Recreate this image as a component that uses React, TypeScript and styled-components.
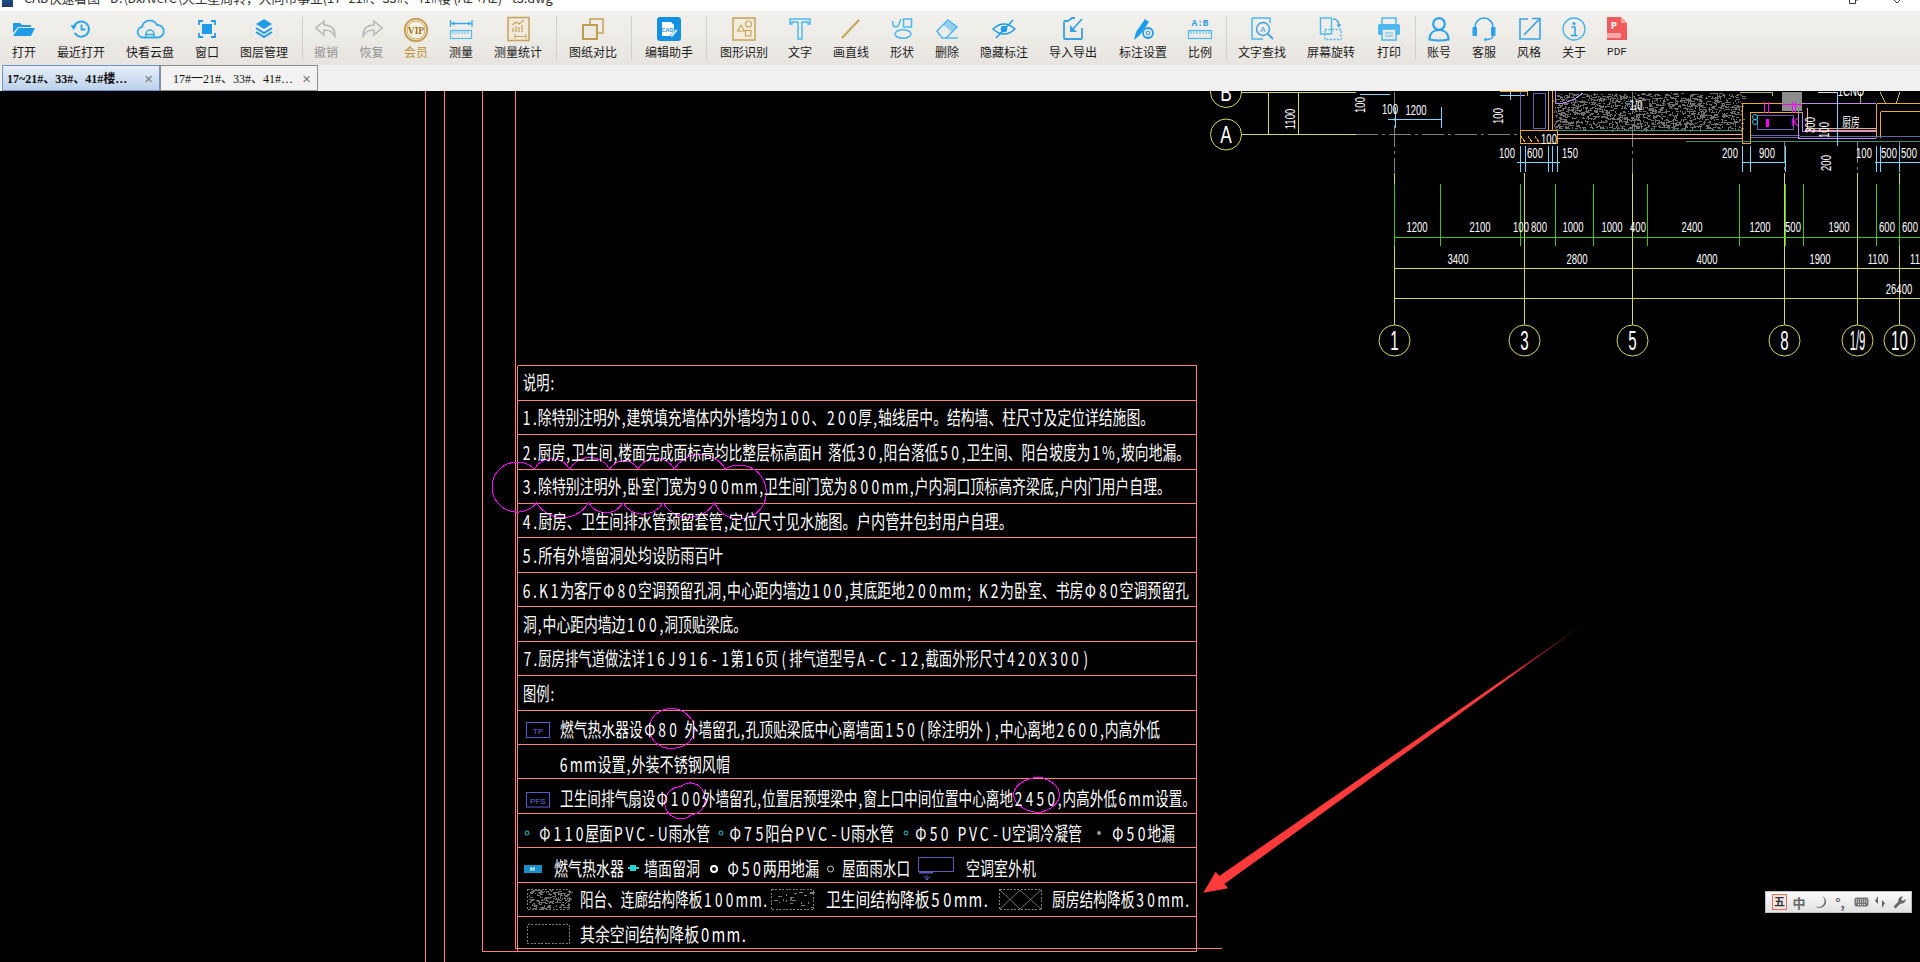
import React, { useMemo } from "react";
import styled, { createGlobalStyle } from "styled-components";

const Global = createGlobalStyle`
  html, body { margin: 0; padding: 0; background: #000; overflow: hidden; }
  * { box-sizing: border-box; }
`;
const Shell = styled.div`
  width: 1920px; height: 962px; display: flex; flex-direction: column; overflow: hidden;
  font-family: "Noto Sans CJK SC", "Liberation Sans", sans-serif;
`;
const TitleBar = styled.div`
  height: 11px; flex: none; background: #fff; display: flex; overflow: hidden; align-items: flex-start;
  padding-left: 2px;
`;
const AppMark = styled.div`
  width: 11px; height: 7px; background: linear-gradient(#1d4f8f, #24385e); flex: none;
`;
const TitleText = styled.div`
  margin: -12px 0 0 11px; font-size: 12.8px; line-height: 20px; color: #333; white-space: nowrap; flex: 1;
`;
const WinIcons = styled.div`
  display: flex; gap: 34px; padding-right: 18px; flex: none; align-items: flex-start;
`;
const Toolbar = styled.div`
  height: 54px; flex: none; display: flex; background: linear-gradient(#f2f1ed, #e8e5e0);
`;
const ToolButton = styled.div<{ $w: number; $tone?: string }>`
  width: ${p => p.$w}px; flex: none; display: flex; flex-direction: column; align-items: center;
  padding-top: 5px; font-size: 12px; line-height: 16px; white-space: nowrap;
  color: ${p => (p.$tone === "off" ? "#929292" : p.$tone === "gold" ? "#c08f2e" : "#1c1c1c")};
`;
const IconBox = styled.div`
  width: 28px; height: 26px; margin-bottom: 2px; flex: none;
  svg { display: block; overflow: visible; }
`;
const PdfLabel = styled.span`
  font-family: "Liberation Mono", monospace; font-size: 11px; font-weight: 400;
`;
const SepSlot = styled.div<{ $w: number }>`
  width: ${p => p.$w}px; flex: none; display: flex; justify-content: center; padding: 5px 0;
`;
const SepLine = styled.div`
  width: 1px; height: 44px; background: #d2cfca;
`;
const TabStrip = styled.div`
  height: 26px; flex: none; background: #f0f0f0; display: flex; padding-left: 2px;
`;
const Tab = styled.div<{ $active?: boolean }>`
  width: 158px; height: 26px; display: flex; align-items: center; justify-content: space-between;
  padding: 0 6px 0 ${p => (p.$active ? 4 : 12)}px; border: 1px solid ${p => (p.$active ? "#6e93c6" : "#8e8e8e")};
  background: ${p => (p.$active ? "linear-gradient(#e6eef8, #bcd2ea)" : "#f2f2f2")};
  font-family: "Liberation Serif", "Noto Sans CJK SC", serif; font-size: 12px;
  font-weight: ${p => (p.$active ? 700 : 400)}; color: #111; white-space: nowrap; overflow: hidden;
`;
const TabClose = styled.span`
  font-family: "Liberation Sans", sans-serif; font-size: 15px; font-weight: 400; color: #777; line-height: 1;
`;
const Canvas = styled.div`
  position: relative; flex: 1; background: #000; overflow: hidden;
  svg.cad { display: block; }
`;
const NoteText = styled.text`
  font-family: "Noto Sans CJK SC", "Liberation Sans", sans-serif; font-weight: 400; font-size: 18px;
  fill: #fff; text-anchor: middle;
`;
const DimText = styled.text`
  font-family: "Liberation Sans", sans-serif; font-size: 14px; fill: #fff; text-anchor: middle;
`;
const ImeBar = styled.div`
  position: absolute; left: 1765px; top: 800px; width: 147px; height: 22px; display: flex; align-items: center;
  padding-left: 6px; background: linear-gradient(#fafafa, #e2e2e2); border: 1px solid #bdbdbd;
  color: #666; font-size: 13px; font-weight: 700;
`;
const ImeCell = styled.span<{ $w: number }>`
  width: ${p => p.$w}px; flex: none; display: flex; justify-content: center; align-items: center; height: 18px;
`;
const ImeLogo = styled.span`
  width: 15px; height: 16px; flex: none; border: 1px solid #e07060; background: #f4e9e4; color: #333;
  font-family: "Liberation Serif", "Noto Sans CJK SC", serif; font-size: 11px; line-height: 14px; text-align: center;
`;

const B = "#1f9ce8", C = "#4db8ef", G = "#c5a35a", Y = "#b9b9b9";
const Sv = ({ children }: { children: React.ReactNode }) => (
  <svg width="28" height="26" viewBox="0 0 28 26" fill="none">{children}</svg>
);
const I: Record<string, React.ReactNode> = {
  open: <Sv><path d="M3 7h7l2 2h9v2H8L3 17z" fill={B}/><path d="M8.5 12H25l-4 8H3z" fill={B}/></Sv>,
  recent: <Sv><path d="M7 11a7.6 7.6 0 1 1 .8 6" stroke="#2aa7ea" strokeWidth="2"/><path d="M3.5 9l6 .5-3 4.5z" fill="#2aa7ea"/><path d="M14.5 8.5v5h4" stroke="#2aa7ea" strokeWidth="1.8"/></Sv>,
  cloud: <Sv><path d="M7 21.5a5.3 5.3 0 0 1-1-10.5 8 8 0 0 1 15-2 6.2 6.2 0 0 1 1 12.5z" stroke="#35abee" strokeWidth="1.8"/><path d="M10 21v-3a4 4 0 0 1 8 0v3M10 18.5h8" stroke="#35abee" strokeWidth="1.5"/></Sv>,
  window: <Sv><path d="M6 9V5h4M18 5h4v4M22 17v4h-4M10 21H6v-4" stroke={B} strokeWidth="1.8"/><rect x="9" y="8" width="10" height="10" fill={B}/></Sv>,
  layers: <Sv><path d="M14 3l8 5-8 5-8-5z" fill={B}/><path d="M6 12l8 5 8-5M6 16l8 5 8-5" stroke={B} strokeWidth="2"/></Sv>,
  undo: <Sv><path d="M12 5L4 12l8 7v-5c5 0 8 1 11 6 0-7-4-11-11-11z" stroke={Y} strokeWidth="1.6"/></Sv>,
  redo: <Sv><path d="M16 5l8 7-8 7v-5c-5 0-8 1-11 6 0-7 4-11 11-11z" stroke={Y} strokeWidth="1.6"/></Sv>,
  vip: <Sv><circle cx="14" cy="14" r="11.2" stroke="#c9a255" strokeWidth="2" fill="#f8f3e6"/><circle cx="14" cy="14" r="9" stroke="#b88a30" strokeWidth=".7"/><text x="14" y="17.5" fontFamily="Liberation Serif" fontWeight="700" fontSize="9.5" fill="#a07018" textAnchor="middle">VIP</text></Sv>,
  measure: <Sv><path d="M3.5 4v7M25 4v7M4 7.5h20.5" stroke="#35abee" strokeWidth="1.3"/><path d="M4 7.5l3.5-2v4zM24.5 7.5l-3.5-2v4z" fill="#35abee"/><rect x="3.5" y="14.5" width="21" height="8" stroke="#59bdf0" strokeWidth="1.2"/><path d="M6 15v3M9 15v3M12 15v3M15 15v3M18 15v3M21 15v3" stroke="#59bdf0"/></Sv>,
  stats: <Sv><rect x="4" y="1.5" width="21" height="23" stroke={G} strokeWidth="1.5" fill="#f2ebdc"/><path d="M8 9l4-3 3 2 5-4M9 16v-4M12 16v-6M15 16v-5M18 16v-7" stroke={G} strokeWidth="1.2"/><path d="M11 18v5M22 18v5M11 20.5h11" stroke={G}/></Sv>,
  compare: <Sv><rect x="11" y="3" width="13" height="14" stroke="#cfb47a" strokeWidth="2"/><rect x="4" y="9" width="14" height="14" stroke="#c09c50" strokeWidth="2" fill="#ece8e2"/></Sv>,
  edit: <Sv><rect x="2" y="1" width="24" height="24" rx="3" fill="#1390e2"/><path d="M7 6h9l3 3v11H7z" fill="#fff"/><text x="12.5" y="15.5" fontFamily="Liberation Sans" fontWeight="700" fontSize="5.5" fill="#1390e2" textAnchor="middle">CAD</text><path d="M15 20l6-7 2 1.5-6 7z" fill="#d7efff" stroke="#1390e2" strokeWidth=".6"/></Sv>,
  shapes2: <Sv><rect x="3" y="2" width="22" height="22" fill="#f3ecdd" stroke={G} strokeWidth="1.5"/><path d="M7.5 15l3.5-6 3.5 6z" stroke={G} strokeWidth="1.1"/><circle cx="18.5" cy="8" r="3" stroke={G} strokeWidth="1.1"/><rect x="15.5" y="14.5" width="5.5" height="5.5" stroke={G} strokeWidth="1.1"/></Sv>,
  text: <Sv><path d="M4 3h20v5h-2V6h-6v17h-4V6H6v2H4z" stroke={C} strokeWidth="1.5"/></Sv>,
  line: <Sv><path d="M5 22L22 4" stroke="#c4a458" strokeWidth="2"/></Sv>,
  shape: <Sv><rect x="15.5" y="3" width="8" height="8" stroke={C} strokeWidth="1.5"/><ellipse cx="15" cy="18" rx="8" ry="4.2" stroke={C} strokeWidth="1.5"/><path d="M5 5c-1 3 0 6 3 6s3-4 5-8" stroke={C} strokeWidth="1.5"/></Sv>,
  eraser: <Sv><path d="M4 15L15 4l9 7-11 11H9z" stroke={C} strokeWidth="1.5"/><path d="M10 9l9 7 5-5-9-7z" fill={C} opacity=".55"/><path d="M13 22h12" stroke={C} strokeWidth="1.5"/></Sv>,
  eye: <Sv><path d="M3 13q11-10 22 0-11 10-22 0z" stroke={B} strokeWidth="1.6"/><circle cx="14" cy="13" r="3.3" fill={B}/><path d="M6 22L23 4" stroke={B} strokeWidth="1.6"/></Sv>,
  io: <Sv><path d="M9 5H5.5Q5 5 5 6v16q0 1 1 1h16q1 0 1-1V12" stroke="#3aa3df" strokeWidth="1.8"/><path d="M9 5l4-3h3M23 3L13 14" stroke="#3aa3df" strokeWidth="1.8"/><path d="M11 9v7h7z" fill="#3aa3df"/></Sv>,
  label: <Sv><path d="M5 24l2-8 9-13 4 3-9 13z" fill="#1f9ce8"/><circle cx="19" cy="17" r="5" stroke={B} strokeWidth="1.8" fill="#ebe8e3"/><circle cx="19" cy="17" r="1.8" stroke={B}/></Sv>,
  ratio: <Sv><text x="14" y="10" fontFamily="Liberation Mono" fontWeight="700" fontSize="9.5" fill={B} textAnchor="middle">A:B</text><rect x="2.5" y="14.5" width="23" height="8" stroke={C} strokeWidth="1.2"/><path d="M5 15v3M8 15v3M11 15v3M14 15v3M17 15v3M20 15v3M23 15v3" stroke={C}/></Sv>,
  find: <Sv><path d="M4 2h18v5M4 2v21h11" stroke={C} strokeWidth="1.5"/><circle cx="15" cy="13" r="6.5" stroke="#3aa3df" strokeWidth="1.4"/><text x="15" y="16" fontFamily="Liberation Sans" fontSize="8" fill="#3aa3df" textAnchor="middle">A</text><path d="M20 18l5 5" stroke="#3aa3df" strokeWidth="1.8"/></Sv>,
  rotate: <Sv><rect x="3.5" y="2" width="11" height="16" stroke={C} strokeWidth="1.4"/><rect x="8" y="13.5" width="16" height="10" stroke={C} strokeWidth="1.4" strokeDasharray="2 1.5"/><path d="M16 3q5 0 6 6" stroke="#3aa3df" strokeWidth="1.3"/><path d="M19.5 8.5h5l-2.5 3z" fill="#3aa3df"/></Sv>,
  print: <Sv><path d="M7 8V2h14v6" stroke={C} strokeWidth="1.5"/><rect x="3" y="8" width="22" height="11" rx="2" fill={C}/><rect x="7" y="13" width="14" height="11" fill="#eeebe6" stroke={C} strokeWidth="1.5"/><path d="M10 17h8M10 20h8" stroke={C}/></Sv>,
  user: <Sv><circle cx="14" cy="8" r="5.8" stroke="#2aa3ea" strokeWidth="2.2"/><path d="M4.5 23.5c0-6 4-9.5 9.5-9.5s9.5 3.500 9.5 9.500q-9.500 2-19 0z" stroke="#2aa3ea" strokeWidth="2.2"/></Sv>,
  headset: <Sv><path d="M5 15V11a9 9 0 0 1 18 0v4" stroke="#2aa3ea" strokeWidth="1.6"/><path d="M3 11.5h3.5v8H3zM21.5 11.5H25v8h-3.5z" fill="#2aa3ea" stroke="#2aa3ea"/><path d="M23 20q0 3-6 3.5" stroke="#2aa3ea" strokeWidth="1.3"/><circle cx="15.5" cy="23.5" r="1.5" fill="#2aa3ea"/></Sv>,
  style: <Sv><path d="M13 3H5v20h20V10M17 2.5h8v8" stroke="#3aa3df" strokeWidth="1.6"/><path d="M24 3.5L9 19" stroke="#3aa3df" strokeWidth="1.6"/></Sv>,
  about: <Sv><circle cx="14" cy="13" r="11" stroke="#47b2e8" strokeWidth="1.3"/><circle cx="14" cy="7.5" r="1.5" fill="#2aa3ea"/><path d="M11.5 11H15v8M11 19.5h6.5" stroke="#2aa3ea" strokeWidth="1.5"/></Sv>,
  pdf: <Sv><path d="M4 1h14l6 6v17H4z" fill="#ef5b5b"/><path d="M18 1l6 6h-6z" fill="#f7a5a5"/><rect x="4" y="17" width="14" height="5" fill="#f6a6a6"/><text x="11" y="13" fontFamily="Liberation Mono" fontWeight="700" fontSize="10" fill="#fff" textAnchor="middle">P</text></Sv>,
};

type Item = { label?: string; w: number; icon?: string; tone?: string };
const tools: Item[] = [
  { label: "打开", w: 48, icon: "open" }, { label: "最近打开", w: 66, icon: "recent" }, { label: "快看云盘", w: 72, icon: "cloud" },
  { label: "窗口", w: 42, icon: "window" }, { label: "图层管理", w: 72, icon: "layers" }, { w: 4 },
  { label: "撤销", w: 44, icon: "undo", tone: "off" }, { label: "恢复", w: 47, icon: "redo", tone: "off" }, { label: "会员", w: 42, icon: "vip", tone: "gold" },
  { label: "测量", w: 48, icon: "measure" }, { label: "测量统计", w: 66, icon: "stats" }, { w: 10 },
  { label: "图纸对比", w: 64, icon: "compare" }, { w: 12 }, { label: "编辑助手", w: 64, icon: "edit" }, { w: 11 },
  { label: "图形识别", w: 64, icon: "shapes2" }, { label: "文字", w: 48, icon: "text" }, { label: "画直线", w: 54, icon: "line" },
  { label: "形状", w: 48, icon: "shape" }, { label: "删除", w: 42, icon: "eraser" }, { label: "隐藏标注", w: 72, icon: "eye" },
  { label: "导入导出", w: 66, icon: "io" }, { label: "标注设置", w: 74, icon: "label" }, { label: "比例", w: 40, icon: "ratio" }, { w: 12 },
  { label: "文字查找", w: 60, icon: "find" }, { label: "屏幕旋转", w: 78, icon: "rotate" }, { label: "打印", w: 38, icon: "print" }, { w: 14 },
  { label: "账号", w: 34, icon: "user" }, { label: "客服", w: 56, icon: "headset" }, { label: "风格", w: 34, icon: "style" },
  { label: "关于", w: 56, icon: "about" }, { label: "PDF", w: 30, icon: "pdf" },
];

const weight = (c: string) => {
  if (c === "," || c === "." || c === ":" || c === ";" || c === " ") return 0.42;
  if (c === "m") return 1.0;
  if (/[0-9A-Za-z\-()]/.test(c)) return 0.8;
  return 1;
};
const Note = ({ x0, x1, y, s, size = 19 }: { x0: number; x1: number; y: number; s: string; size?: number }) => {
  const chars = Array.from(s);
  const total = chars.reduce((a, c) => a + weight(c), 0);
  const unit = (x1 - x0) / total;
  const sx = unit / size;
  let acc = 0;
  const xs = chars.map(c => {
    const w = weight(c);
    const mid = acc + (w * size) / 2;
    acc += w * size;
    return mid.toFixed(2);
  });
  return (
    <NoteText transform={`translate(${x0} ${y - 1}) scale(${sx.toFixed(4)} 1)`} x={xs.join(" ")} style={{ fontSize: size }}>
      {s}
    </NoteText>
  );
};
const Dim = ({ x, y, s, rot, w = 0.68 }: { x: number; y: number; s: string; rot?: boolean; w?: number }) => (
  <DimText transform={`translate(${x} ${y})${rot ? " rotate(-90)" : ""} scale(${w} 1)`}>{s}</DimText>
);

const dist = (a: number[], b: number[]) => Math.hypot(a[0] - b[0], a[1] - b[1]);
const scallop = (pts: number[][]) =>
  pts.slice(1).map((p, i) => {
    const r = dist(p, pts[i]) * 0.58;
    return `A${r.toFixed(1)} ${r.toFixed(1)} 0 0 1 ${p[0]} ${p[1]}`;
  }).join(" ");

const noisePath = (x0: number, y0: number, x1: number, y1: number, n: number, seed: number) => {
  let s = seed;
  const rnd = () => { s = (s * 16807) % 2147483647; return s / 2147483647; };
  let d = "";
  for (let i = 0; i < n; i++) {
    const x = Math.round(x0 + rnd() * (x1 - x0)) + 0.5;
    const y = Math.round(y0 + rnd() * (y1 - y0)) + 0.5;
    const k = rnd();
    d += k < 0.5 ? `M${x} ${y}h${2 + Math.round(rnd() * 2)}` : k < 0.8 ? `M${x} ${y}v2` : `M${x} ${y}h1`;
  }
  return d;
};

const PINK = "#ff7f7f", YEL = "#d6d65e", GRN = "#3fc612", CY = "#7fd4ff", OR = "#f2ab1c", PUR = "#b98af0", SAL = "#f6a98a", TEAL = "#3f8f78", VIO = "#6a5fb0", MAG = "#ff00ff", GRY = "#808080";

const rowYs = [365, 400, 434, 469, 503, 537, 572, 606, 641, 675, 710, 744, 778, 813, 847, 882, 916];
const greenX = [1394, 1440, 1520, 1555, 1593, 1647, 1739, 1785, 1803, 1876, 1899];
const axisX = [1394, 1524, 1632, 1784, 1857, 1899];
const axisL: [number, string][] = [[1394, "1"], [1524, "3"], [1632, "5"], [1784, "8"], [1857, "1/9"], [1899, "10"]];
const dims1: [number, string][] = [[1417, "1200"], [1480, "2100"], [1521, "100"], [1539, "800"], [1573, "1000"], [1612, "1000"], [1638, "400"], [1692, "2400"], [1760, "1200"], [1793, "500"], [1839, "1900"], [1887, "600"], [1910, "600"]];
const dims2: [number, string][] = [[1458, "3400"], [1577, "2800"], [1707, "4000"], [1820, "1900"], [1878, "1100"], [1915, "11"]];
const dims3: [number, string][] = [[1507, "100"], [1535, "600"], [1570, "150"], [1730, "200"], [1767, "900"], [1864, "100"], [1889, "500"], [1909, "500"]];

function CadDrawing() {
  const hatch = useMemo(() => noisePath(1553, 93, 1741, 129, 1500, 4711), []);
  const hatch2 = useMemo(() => noisePath(528, 890, 568, 908, 170, 977), []);
  const dots = useMemo(() => noisePath(773, 891, 812, 907, 22, 331), []);
  return (
    <svg className="cad" width="1920" height="871" viewBox="0 91 1920 871">
      <defs>
        <linearGradient id="arrowFade" gradientUnits="userSpaceOnUse" x1="1595" y1="616" x2="1203" y2="893">
          <stop offset="0" stopColor="#ff3a3a" stopOpacity="0"/>
          <stop offset=".25" stopColor="#ff3a3a"/>
          <stop offset="1" stopColor="#ff3a3a"/>
        </linearGradient>
      </defs>
      <g shapeRendering="crispEdges" strokeWidth="1" fill="none">
        <g stroke={PINK}>
          <path d="M425.5 91V962M444.5 91V962M482.5 91V951.5H1196.5M515.5 91V948.5H1222M517.5 365.5V951.5M1196.5 365.5V951.5"/>
          {rowYs.map(y => <path key={y} d={`M517.5 ${y + 0.5}H1196.5`}/>)}
        </g>
        <g stroke={YEL}>
          <path d="M1241 92.5H1356M1241 134.5H1356M1268.5 92V134M1298.5 92V134"/>
          {axisX.map(x => <path key={x} d={`M${x + 0.5} 173V325`}/>)}
          <path d="M1394 268.5H1920M1394 298.5H1920"/>
        </g>
        <path d="M1356 134.5H1520M1394.5 92V172M1632.5 92V173M1784.5 141V173M1857.5 141V173M1899.5 141V173" stroke={GRY} strokeDasharray="22 4 3 4"/>
        <path d="M1394 237.5H1920" stroke={GRN}/>
        {greenX.map(x => <path key={x} d={`M${x + 0.5} 184V246`} stroke={GRN}/>)}
        <g stroke={CY}>
          <path d="M1360 94H1390M1388 119.5H1441M1395.5 107V128M1441.5 107V128M1517 162.5H1560M1520.5 146V172M1525.5 146V172M1548.5 146V172M1552.5 146V172M1557.5 146V172"/>
          <path d="M1742 162.5H1786M1742.5 146V172M1750.5 146V172M1785.5 146V172M1875 162.5H1920M1876.5 146V172M1880.5 146V172M1899.5 146V172M1837.5 92V146"/>
          <path d="M1500 95.5H1525M1510.5 92V100"/>
        </g>
        <path d={hatch} stroke="#6e6e6e"/>
        <path d="M1500 91.5H1527V96M1548.5 91V130M1552.5 91V130M1520.5 130.5H1557.5V143.5H1520.5ZM1742 103.5H1803M1750.5 112.5H1802M1742 103.5V143.5H1750V112M1876.5 103.5V138M1876.5 103.5H1920M1880.5 111.5H1920M1880.5 111.5V138" stroke={OR}/>
        <path d="M1557 134.5H1742M1557 138.5H1742M1806 128.5H1876M1806 130.5H1876M1807.5 108V129" stroke={SAL}/>
        <path d="M1557 130.5H1742M1686 141.5H1920" stroke={TEAL}/>
        <path d="M1751 135.5H1800M1751 137.5H1800M1800 136H1920M1520 91.5V130M1533.5 93H1545V128H1533.5ZM1757.5 115.5H1793V129H1757.5Z" stroke={VIO}/>
        <path d="M1555 91V104Q1570 104 1583 93M1798.5 111V138.5H1876M1802.5 103.5H1876M1802 112V131.5H1876" stroke={PUR}/>
        <rect x="1782" y="92" width="20" height="19" fill="#8c8c8c" stroke="none"/>
        <path d="M1764.5 102V113M1768 102V113M1792 102V113M1795.5 102V113M1781.5 104H1802" stroke={MAG}/>
        <path d="M1740 92H1772V96M1860 92V104M1880 92L1886 104M1900 92L1896 104" stroke="#b9b94f"/>
        <path d="M1818 92H1837" stroke="#ddd"/>
        <path d="M1521 136.5L1525 142M1528 136.5L1532 142M1535 136.5L1539 142" stroke={OR}/>
        <path d="M1837.5 92V146" stroke={CY}/>
      </g>
      <rect x="526.5" y="722.5" width="23" height="15" fill="none" stroke="#5b5bd0"/>
      <rect x="526.5" y="792.5" width="23" height="14.5" fill="none" stroke="#5b5bd0"/>
      <text x="533" y="733.5" fontFamily="Liberation Sans" fontSize="8" fill="#6b6be0">TP</text>
      <text x="530" y="803.5" fontFamily="Liberation Sans" fontSize="8" fill="#6b6be0">PFS</text>

      <g fill="none" stroke={MAG} strokeWidth="1" shapeRendering="crispEdges">
        <path d={`M534.3 469 ${scallop([[534.3, 469], [569.7, 469], [609.8, 469], [638, 469], [674.4, 469], [725.4, 469]])} A27 27 0 1 1 714.5 502.7 ${scallop([[714.5, 502.7], [663, 502.7], [623, 502.7], [588.5, 502.7], [536.6, 502.7]])} A25 25 0 1 1 534.3 469`}/>
        <path d="M678 747.6A22 20 0 1 1 687.6 715A21 19 0 0 1 678 747.6"/>
        <path d="M680.6 786.7A16 16 0 1 0 691 815A15 16 0 1 0 680.6 786.7"/>
        <path d="M1039 812.7A29 18 0 0 1 1039 777A31 19 0 0 1 1039 812.7"/>
      </g>

      <g fill="none">
        <circle cx="527" cy="833" r="2" stroke="#25c8d8"/>
        <circle cx="721" cy="833" r="2" stroke="#25c8d8"/>
        <circle cx="906" cy="833" r="2" stroke="#25c8d8"/>
        <circle cx="1099" cy="833" r="2" fill="#999"/>
        <circle cx="714" cy="869" r="3" stroke="#fff" strokeWidth="2"/>
        <circle cx="830.5" cy="869" r="3" stroke="#ccc"/>
        <rect x="918.5" y="857.5" width="35" height="14" stroke="#5c58b8"/>
        <path d="M919 872.5H933" stroke="#5c58b8" strokeWidth="2"/>
        <path d="M927 875V880M924 876L927 880L930 876" stroke="#5c58b8"/>
        <path d="M628 868H639" stroke="#22d4d4" strokeWidth="2"/>
        <rect x="630" y="865" width="6" height="6" fill="#22d4d4"/>
        <rect x="524" y="865" width="18" height="8" fill="#1a90c8"/>
        <path d="M531 867v4M534 867v4M531 869h3" stroke="#fff"/>
        <g stroke="#7f7f7f" strokeDasharray="2 1.5" shapeRendering="crispEdges">
          <rect x="527.5" y="889.5" width="42" height="20"/>
          <rect x="771.5" y="889.5" width="42" height="20"/>
          <rect x="999.5" y="889.5" width="42" height="20"/>
          <rect x="527.5" y="924.5" width="42" height="19"/>
        </g>
        <path d={hatch2} stroke="#6e6e6e" shapeRendering="crispEdges"/>
        <path d={dots} stroke="#7f7f7f" shapeRendering="crispEdges"/>
        <path d="M1000 890L1020 909L1041 890M1000 909L1020 890L1041 909" stroke="#707070"/>
      </g>

      <Note x0={523} x1={555} y={391} s="说明:"/>
      <Note x0={521} x1={1154} y={426} s="1.除特别注明外,建筑填充墙体内外墙均为100、200厚,轴线居中。结构墙、柱尺寸及定位详结施图。"/>
      <Note x0={521} x1={1190} y={461} s="2.厨房,卫生间,楼面完成面标高均比整层标高面H 落低30,阳台落低50,卫生间、阳台坡度为1%,坡向地漏。"/>
      <Note x0={521} x1={1171} y={495} s="3.除特别注明外,卧室门宽为900mm,卫生间门宽为800mm,户内洞口顶标高齐梁底,户内门用户自理。"/>
      <Note x0={521} x1={1013} y={530} s="4.厨房、卫生间排水管预留套管,定位尺寸见水施图。户内管井包封用户自理。"/>
      <Note x0={521} x1={723} y={564} s="5.所有外墙留洞处均设防雨百叶"/>
      <Note x0={521} x1={1189} y={599} s="6.K1为客厅Φ80空调预留孔洞,中心距内墙边100,其底距地200mm; K2为卧室、书房Φ80空调预留孔"/>
      <Note x0={523} x1={747} y={633} s="洞,中心距内墙边100,洞顶贴梁底。"/>
      <Note x0={522} x1={1091} y={667} s="7.厨房排气道做法详16J916-1第16页(排气道型号A-C-12,截面外形尺寸420X300)"/>
      <Note x0={523} x1={555} y={702} s="图例:"/>
      <Note x0={560} x1={1160} y={738} s="燃气热水器设Φ80 外墙留孔,孔顶贴梁底中心离墙面150(除注明外),中心离地2600,内高外低"/>
      <Note x0={558} x1={730} y={773} s="6mm设置,外装不锈钢风帽"/>
      <Note x0={560} x1={1196} y={807} s="卫生间排气扇设Φ100外墙留孔,位置居预埋梁中,窗上口中间位置中心离地2450,内高外低6mm设置。"/>
      <Note x0={538} x1={710} y={842} s="Φ110屋面PVC-U雨水管"/>
      <Note x0={728} x1={894} y={842} s="Φ75阳台PVC-U雨水管"/>
      <Note x0={914} x1={1082} y={842} s="Φ50 PVC-U空调冷凝管"/>
      <Note x0={1111} x1={1175} y={842} s="Φ50地漏"/>
      <Note x0={554} x1={624} y={877} s="燃气热水器"/>
      <Note x0={644} x1={700} y={877} s="墙面留洞"/>
      <Note x0={726} x1={819} y={877} s="Φ50两用地漏"/>
      <Note x0={842} x1={910} y={877} s="屋面雨水口"/>
      <Note x0={966} x1={1036} y={877} s="空调室外机"/>
      <Note x0={580} x1={768} y={908} s="阳台、连廊结构降板100mm."/>
      <Note x0={826} x1={989} y={908} s="卫生间结构降板50mm."/>
      <Note x0={1052} x1={1190} y={908} s="厨房结构降板30mm."/>
      <Note x0={580} x1={747} y={943} s="其余空间结构降板0mm."/>

      <g fill="none" stroke={YEL}>
        <circle cx="1226" cy="134.5" r="15.5"/>
        <circle cx="1226" cy="92" r="15.5"/>
        {axisL.map(([x]) => <circle key={x} cx={x + 0.5} cy="340.5" r="15.5"/>)}
      </g>
      <text x="0" y="0" fontFamily="Liberation Sans" fontSize="24" fill="#fff" textAnchor="middle" transform="translate(1226 143) scale(.72 1)">A</text>
      <text x="0" y="0" fontFamily="Liberation Sans" fontSize="24" fill="#fff" textAnchor="middle" transform="translate(1226 101) scale(.72 1)">B</text>
      {axisL.map(([x, s]) => (
        <text key={s} x="0" y="0" fontFamily="Liberation Sans" fontSize="27" fill="#fff" textAnchor="middle"
          transform={`translate(${x + 0.5} 350) scale(${s === "1/9" ? 0.42 : 0.56} 1)`}>{s}</text>
      ))}
      {dims1.map(([x, s]) => <Dim key={x} x={x} y={232} s={s}/>)}
      {dims2.map(([x, s]) => <Dim key={x} x={x} y={264} s={s}/>)}
      {dims3.map(([x, s]) => <Dim key={x} x={x} y={158} s={s}/>)}
      <Dim x={1899} y={294} s="26400"/>
      <Dim x={1390} y={114} s="100"/>
      <Dim x={1416} y={115} s="1200"/>
      <Dim x={1295} y={119} s="1100" rot/>
      <Dim x={1365} y={105} s="100" rot/>
      <Dim x={1503} y={116} s="100" rot/>
      <Dim x={1831} y={163} s="200" rot/>
      <Dim x={1636} y={110} s="1/0"/>
      <Dim x={1829} y={130} s="100" rot/>
      <Dim x={1815} y={125} s="300" rot/>
      <Dim x={1549} y={144} s="100"/>
      <Dim x={1851} y={96} s="1CNO"/>
      <text x="0" y="0" fontFamily="Noto Sans CJK SC" fontSize="12" fill="#fff" textAnchor="middle" transform="translate(1851 127) scale(.73 1)">厨房</text>
      <rect x="1766" y="119" width="3" height="8" fill={MAG}/>
      <text x="1791" y="126" fontFamily="Liberation Sans" fontSize="11" fill={MAG}>K</text>
      <circle cx="1755" cy="117" r="2.5" fill="none" stroke="#2cc5e8"/>
      <circle cx="1755" cy="122" r="2.5" fill="none" stroke="#2cc5e8"/>
      <path d="M1203.3 892.7L1215.7 871.7L1219.3 876L1595 616L1224.3 884L1228.3 888.3Z" fill="url(#arrowFade)"/>
    </svg>
  );
}

export default function App() {
  return (
    <Shell>
      <Global/>
      <TitleBar>
        <AppMark/>
        <TitleText>CAD快速看图 - D:\DxAverC\天王星周转，大同市事业(17~21#、33#、41#楼 (A2 +A2) ~t3.dwg</TitleText>
        <WinIcons>
          <svg width="10" height="4" viewBox="0 0 10 4" fill="none"><path d="M1.5 0v3.5h6V0M9 0v1" stroke="#333"/></svg>
          <svg width="10" height="4" viewBox="0 0 10 4" fill="none"><path d="M2 0l3 3 3-3" stroke="#333"/></svg>
        </WinIcons>
      </TitleBar>
      <Toolbar>
        {tools.map((t, i) =>
          t.label ? (
            <ToolButton key={i} $w={t.w} $tone={t.tone}>
              <IconBox>{I[t.icon as string]}</IconBox>
              {t.label === "PDF" ? <PdfLabel>PDF</PdfLabel> : t.label}
            </ToolButton>
          ) : (
            <SepSlot key={i} $w={t.w}><SepLine/></SepSlot>
          )
        )}
      </Toolbar>
      <TabStrip>
        <Tab $active>17~21#、33#、41#楼…<TabClose>×</TabClose></Tab>
        <Tab>17#一21#、33#、41#…<TabClose>×</TabClose></Tab>
      </TabStrip>
      <Canvas>
        <CadDrawing/>
        <ImeBar>
          <ImeLogo>五</ImeLogo>
          <ImeCell $w={24}>中</ImeCell>
          <ImeCell $w={18}><svg width="14" height="14" viewBox="0 0 14 14"><path d="M9 1a6 6 0 0 1-7 10 6.5 6.5 0 0 0 10-1 6 6 0 0 0-3-9z" fill="#666"/></svg></ImeCell>
          <ImeCell $w={22}>°,</ImeCell>
          <ImeCell $w={20}><svg width="15" height="10" viewBox="0 0 15 10"><rect x=".5" y=".5" width="14" height="9" rx="2" fill="#777"/><path d="M2 3h11M2 5h11M4 7.5h7" stroke="#eee" strokeDasharray="1 1"/></svg></ImeCell>
          <ImeCell $w={18}><svg width="12" height="12" viewBox="0 0 12 12"><path d="M4 0v8L1 5zM8 12V4l3 3z" fill="#666"/></svg></ImeCell>
          <ImeCell $w={20}><svg width="13" height="13" viewBox="0 0 13 13"><path d="M12.5 3L10 5 8 3l2-2.500a4 4 0 0 0-4.500 5L.5 10.500 2.500 12.500l5-5a4 4 0 0 0 5-4.500z" fill="#666"/></svg></ImeCell>
        </ImeBar>
      </Canvas>
    </Shell>
  );
}
